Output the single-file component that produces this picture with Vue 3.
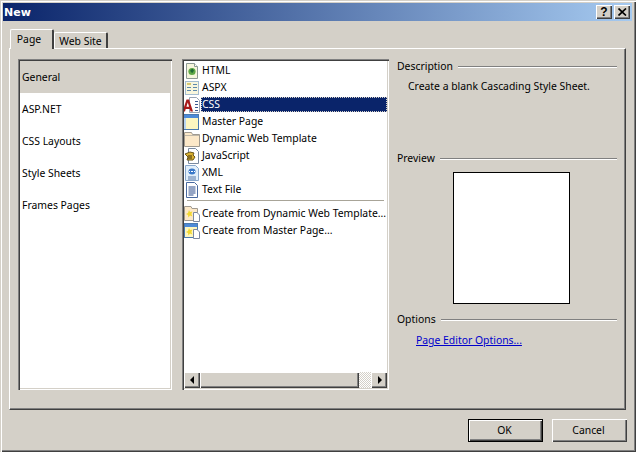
<script setup>
const categories = ['General', 'ASP.NET', 'CSS Layouts', 'Style Sheets', 'Frames Pages']
const files = [
  { label: 'HTML', icon: 'html' },
  { label: 'ASPX', icon: 'aspx' },
  { label: 'CSS', icon: 'css', selected: true },
  { label: 'Master Page', icon: 'master' },
  { label: 'Dynamic Web Template', icon: 'dwt' },
  { label: 'JavaScript', icon: 'js' },
  { label: 'XML', icon: 'xml' },
  { label: 'Text File', icon: 'text' }
]
const creators = [
  { label: 'Create from Dynamic Web Template...', icon: 'fromdwt' },
  { label: 'Create from Master Page...', icon: 'frommaster' }
]
</script>

<template>
  <div class="dialog">
    <header class="titlebar">
      <span class="title">New</span>
      <div class="caption-buttons">
        <button class="cap help">?</button>
        <button class="cap close">
          <svg width="9" height="8" viewBox="0 0 9 8"><path d="M0.5 0.5 L8 7.5 M8 0.5 L0.5 7.5" stroke="#000" stroke-width="1.7" fill="none"/></svg>
        </button>
      </div>
    </header>

    <nav class="tabs">
      <div class="tab active">Page</div>
      <div class="tab">Web Site</div>
    </nav>

    <section class="panel">
      <ul class="categories sunken">
        <li v-for="(c, i) in categories" :key="c" class="category" :class="{ current: i === 0 }">{{ c }}</li>
      </ul>

      <div class="files sunken">
        <div class="file-scroll">
          <div v-for="f in files" :key="f.label" class="file">
            <svg class="ico" width="16" height="16" viewBox="0 0 16 16">
              <template v-if="f.icon === 'html'">
                <path d="M2.5 .5H10.5L13.5 3.5V15.5H2.5Z" fill="#f6f6dc" stroke="#8e9a94"/>
                <path d="M10.5 .5V3.5H13.5" fill="#fff" stroke="#8e9a94"/>
                <circle cx="8" cy="8.5" r="3.6" fill="#5fa846"/>
                <path d="M6.2 7l2.4-1.3 1.4 1.8-1.6 2.6-1.6-1Z" fill="#1f6a34"/>
              </template>
              <template v-else-if="f.icon === 'aspx'">
                <rect x="1.5" y="1.5" width="13" height="13" fill="#f8f6dc" stroke="#a4bcd0"/>
                <path d="M3 4.5h4M3 7.5h4M3 10.5h4M9 4.5h4M9 7.5h4M9 10.5h4" stroke="#5d88ac"/>
                <rect x="3" y="3" width="4" height="2" fill="#d8c870"/>
              </template>
              <template v-else-if="f.icon === 'css'">
                <path d="M5.5 .5H12.5L15.5 3.5V15.5H5.5Z" fill="#fff" stroke="#98a4b4"/>
                <path d="M11 4.5h3M11 7.5h3M11 10.5h3M11 13.5h3" stroke="#3a5a90"/>
                <path d="M-1.5 14.5 L2.5 2.5H5L9 14.5H6.5L5.8 12H1.7L1 14.5ZM2.4 9.8H5.1L3.8 5.5Z" fill="#a81a1a"/>
              </template>
              <template v-else-if="f.icon === 'master'">
                <rect x="-0.5" y="0.5" width="15" height="15" fill="#fdf6c0" stroke="#4a7ab0"/>
                <rect x="0" y="1" width="14" height="3" fill="#4c8ad8"/>
                <rect x="0" y="4" width="2" height="11" fill="#b8d4f0"/>
              </template>
              <template v-else-if="f.icon === 'dwt'">
                <path d="M0.5 15.5V1.5H7.5L8.5 3.5H15.5V15.5Z" fill="#fce8c8" stroke="#a09a90"/>
                <path d="M1 4.5H15" stroke="#c0b8a8"/>
              </template>
              <template v-else-if="f.icon === 'js'">
                <path d="M4.5 .5H11.5L14.5 3.5V15.5H4.5Z" fill="#fff" stroke="#7a8aa0"/>
                <path d="M1 6L6 4 10 5 9 7 11 9 9 12 3 12 4 9Z" fill="#d8b030" stroke="#6a5418"/>
                <path d="M4 8h4M4 10h4" stroke="#403010"/>
              </template>
              <template v-else-if="f.icon === 'xml'">
                <path d="M1.5 .5H11.5L14.5 3.5V15.5H1.5Z" fill="#e2effa" stroke="#8aa8cc"/>
                <path d="M4 12h8M4 14h8" stroke="#5878a8"/>
                <ellipse cx="8" cy="6.5" rx="3.5" ry="3" fill="#3a78c8"/>
                <path d="M5 6.5h1M7 6.5h2M10 6.5h1" stroke="#fff"/>
              </template>
              <template v-else-if="f.icon === 'text'">
                <path d="M2.5 .5H10.5L13.5 3.5V15.5H2.5Z" fill="#fff" stroke="#4a6aa0"/>
                <path d="M4.5 5h7M4.5 7h7M4.5 9h7M4.5 11h7M4.5 13h5" stroke="#2a4a8a"/>
              </template>
            </svg>
            <span class="file-label" :class="{ selected: f.selected }">{{ f.label }}</span>
          </div>
          <div class="divider"></div>
          <div v-for="c in creators" :key="c.label" class="file">
            <svg class="ico" width="16" height="16" viewBox="0 0 16 16">
              <template v-if="c.icon === 'fromdwt'">
                <path d="M0.5 14.5V0.5H7L8 2.5H13.5V14.5Z" fill="#fce8c8" stroke="#a09a90"/>
                <path d="M9.5 6.5H13L15.5 9V15.5H9.5Z" fill="#fff" stroke="#7c88a0"/>
                <path d="M5 4l1 2 2.4-.6L7.4 8l1 2.4-2.4-.8L4.4 11.5 4 9 2 8l2-1Z" fill="#f2d830"/>
              </template>
              <template v-else>
                <rect x="0.5" y="0.5" width="13" height="14" fill="#fdf6c0" stroke="#4a7ab0"/>
                <rect x="1" y="1" width="12" height="3" fill="#4c8ad8"/>
                <path d="M9.5 6.5H13L15.5 9V15.5H9.5Z" fill="#fff" stroke="#7c88a0"/>
                <path d="M5 5l1 2 2.4-.6L7.4 9l1 2.4-2.4-.8L4.4 12.5 4 10 2 9l2-1Z" fill="#f2d830"/>
              </template>
            </svg>
            <span class="file-label">{{ c.label }}</span>
          </div>
        </div>
        <div class="hscroll">
          <button class="sb-btn"><svg width="5" height="8" viewBox="0 0 5 8"><path d="M4 0V8L0 4Z"/></svg></button>
          <div class="sb-track">
            <div class="sb-thumb"></div>
            <div class="sb-rest"></div>
          </div>
          <button class="sb-btn"><svg width="5" height="8" viewBox="0 0 5 8"><path d="M1 0V8L5 4Z"/></svg></button>
        </div>
      </div>

      <aside class="details">
        <div class="legend"><span>Description</span><i></i></div>
        <p class="desc">Create a blank Cascading Style Sheet.</p>
        <div class="legend preview-legend"><span>Preview</span><i></i></div>
        <div class="preview"></div>
        <div class="legend options-legend"><span>Options</span><i></i></div>
        <a class="link">Page Editor Options...</a>
      </aside>
    </section>

    <footer class="footer">
      <button class="btn default">OK</button>
      <button class="btn">Cancel</button>
    </footer>
  </div>
</template>

<style>
html, body { margin: 0; padding: 0; background: #d4d0c8; }
</style>

<style scoped>
* { box-sizing: border-box; }
.dialog {
  width: 636px;
  height: 452px;
  padding: 3px 4px 0 3px;
  background: #d4d0c8;
  display: flex;
  flex-direction: column;
  font-family: "Noto Sans", "Open Sans", sans-serif;
  font-size: 10.4px;
  color: #000;
  box-shadow: inset 1px 1px 0 #d4d0c8, inset 2px 2px 0 #fff, inset -1px -1px 0 #404040, inset -2px -2px 0 #808080;
  overflow: hidden;
}
.titlebar {
  height: 18px;
  flex: none;
  padding: 0 2px 0 1px;
  display: flex;
  align-items: center;
  justify-content: space-between;
  background: linear-gradient(90deg, #0a246a, #a6caf0);
}
.title { color: #fff; font-weight: 700; font-size: 11px; font-family: "DejaVu Sans", sans-serif; }
.caption-buttons { display: flex; gap: 2px; }
.cap {
  width: 16px;
  height: 14px;
  padding: 0;
  border: 0;
  background: #d4d0c8;
  display: flex;
  align-items: center;
  justify-content: center;
  box-shadow: inset 1px 1px 0 #fff, inset -1px -1px 0 #404040, inset -2px -2px 0 #808080;
  font: 700 12px "Liberation Sans", sans-serif;
  color: #000;
}
.tabs {
  flex: none;
  display: flex;
  align-items: flex-end;
  height: 27px;
  padding-left: 7px;
  position: relative;
  z-index: 1;
}
.tab {
  width: 54px;
  height: 16px;
  padding-top: 1px;
  text-align: center;
  line-height: 14px;
  border-top: 1px solid #fff;
  border-left: 1px solid #fff;
  border-right: 2px solid #404040;
  border-radius: 2px 2px 0 0;
}
.tab.active {
  width: 44px;
  height: 20px;
  padding-top: 2px;
  padding-right: 5px;
  margin-bottom: -1px;
  background: #d4d0c8;
}
.panel {
  flex: none;
  width: 617px;
  height: 362px;
  margin-left: 6px;
  padding: 10px 8px 19px 8px;
  display: flex;
  border-top: 1px solid #fff;
  border-left: 1px solid #fff;
  border-right: 1px solid #404040;
  border-bottom: 1px solid #404040;
  box-shadow: inset -1px -1px 0 #808080;
}
.sunken {
  background: #fff;
  height: 331px;
  padding: 2px;
  box-shadow: inset 1px 1px 0 #808080, inset 2px 2px 0 #404040, inset -1px -1px 0 #fff, inset -2px -2px 0 #d4d0c8;
}
.categories {
  width: 154px;
  flex: none;
  margin: 0 10px 0 0;
  list-style: none;
}
.category {
  height: 32px;
  padding-left: 2px;
  line-height: 32px;
}
.category.current { background: #d4d0c8; }
.files {
  width: 207px;
  flex: none;
  margin-right: 8px;
  display: flex;
  flex-direction: column;
}
.file-scroll {
  flex: 1;
  padding-top: 1px;
  overflow: hidden;
}
.file {
  display: flex;
  align-items: center;
  height: 17px;
  white-space: nowrap;
}
.ico { flex: none; width: 16px; height: 16px; overflow: visible; }
.file-label {
  margin-left: 1px;
  padding: 0 1px;
  line-height: 15px;
}
.file-label.selected {
  background: #0a246a;
  color: #fff;
  flex: 1;
  outline: 1px dotted #d4d0c8;
  outline-offset: -1px;
}
.divider {
  height: 1px;
  margin: 2px 3px 4px 3px;
  background: #a8a498;
  box-shadow: 0 1px 0 #fff;
}
.hscroll {
  flex: none;
  height: 16px;
  display: flex;
}
.sb-btn {
  width: 16px;
  height: 16px;
  flex: none;
  padding: 0;
  border: 0;
  background: #d4d0c8;
  display: flex;
  align-items: center;
  justify-content: center;
  box-shadow: inset 1px 1px 0 #fff, inset -1px -1px 0 #404040, inset -2px -2px 0 #808080;
}
.sb-track { flex: 1; display: flex; }
.sb-thumb {
  flex: 1;
  background: #d4d0c8;
  box-shadow: inset 1px 1px 0 #fff, inset -1px -1px 0 #404040, inset -2px -2px 0 #808080;
}
.sb-rest {
  width: 12px;
  background: repeating-conic-gradient(#d4d0c8 0 25%, #fff 0 50%) 0 0 / 2px 2px;
}
.details {
  flex: 1;
  min-width: 0;
  padding-top: 1px;
  display: flex;
  flex-direction: column;
}
.legend {
  display: flex;
  align-items: center;
  height: 12px;
  flex: none;
  gap: 5px;
}
.legend i {
  flex: 1;
  height: 1px;
  background: #808080;
  box-shadow: 0 1px 0 #fff;
}
.desc { margin: 7px 0 0 11px; line-height: 14px; }
.preview-legend { margin-top: 59px; }
.preview {
  width: 117px;
  height: 132px;
  flex: none;
  margin: 8px 0 0 56px;
  background: #fff;
  border: 1px solid #000;
}
.options-legend { margin-top: 9px; }
.link {
  margin: 8px 0 0 19px;
  color: #0000cc;
  text-decoration: underline;
  line-height: 14px;
}
.footer {
  flex: 1;
  display: flex;
  justify-content: flex-end;
  gap: 9px;
  padding: 9px 5px 0 0;
}
.btn {
  width: 75px;
  height: 23px;
  padding: 0 2px 2px 0;
  border: 0;
  background: #d4d0c8;
  font: inherit;
  color: #000;
  box-shadow: inset 1px 1px 0 #fff, inset -1px -1px 0 #404040, inset -2px -2px 0 #808080;
}
.btn.default {
  box-shadow: inset 0 0 0 1px #000, inset 2px 2px 0 #fff, inset -2px -2px 0 #404040, inset -3px -3px 0 #808080;
}
</style>
